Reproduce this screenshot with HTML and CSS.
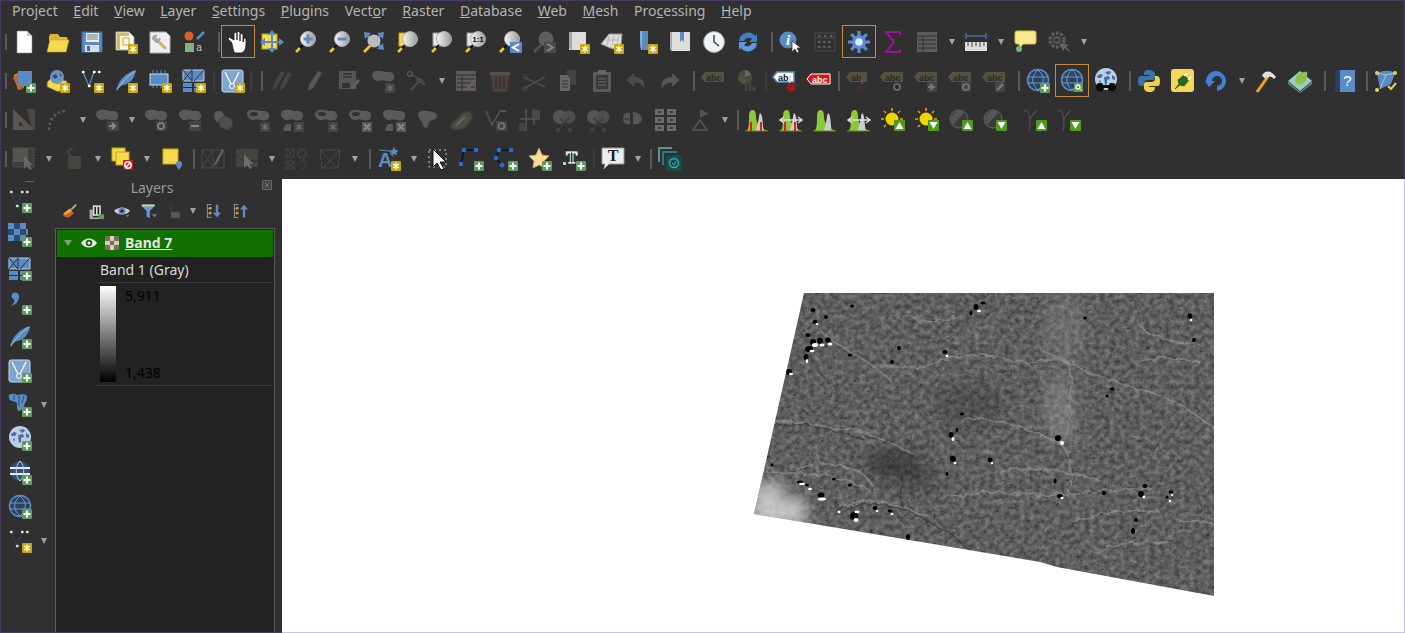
FILE: index.html
```html
<!DOCTYPE html>
<html lang="en">
<head>
<meta charset="utf-8">
<title>QGIS</title>
<link rel="stylesheet" href="styles.css">
</head>
<body>
<div class="app">
<nav class="menu">
<span>Pro<u>j</u>ect</span><span><u>E</u>dit</span><span><u>V</u>iew</span><span><u>L</u>ayer</span><span><u>S</u>ettings</span><span><u>P</u>lugins</span><span>Vect<u>o</u>r</span><span><u>R</u>aster</span><span><u>D</u>atabase</span><span><u>W</u>eb</span><span><u>M</u>esh</span><span>Pro<u>c</u>essing</span><span><u>H</u>elp</span>
</nav>

<div class="row">
<i class="h"></i>
<span class="b"><svg viewBox="0 0 24 24"><use href="#new"/></svg></span>
<span class="b"><svg viewBox="0 0 24 24"><use href="#open"/></svg></span>
<span class="b"><svg viewBox="0 0 24 24"><use href="#save"/></svg></span>
<span class="b"><svg viewBox="0 0 24 24"><use href="#layout"/><use href="#bs"/></svg></span>
<span class="b"><svg viewBox="0 0 24 24"><use href="#laymgr"/></svg></span>
<span class="b"><svg viewBox="0 0 24 24"><use href="#style"/></svg></span>
<i class="s w10"></i>
<span class="b on"><svg viewBox="0 0 24 24"><use href="#hand"/></svg></span>
<span class="b"><svg viewBox="0 0 24 24"><use href="#pansel"/></svg></span>
<span class="b"><svg viewBox="0 0 24 24"><use href="#gl"/><path d="M14 4.500v9M9.500 9h9" class="bl3"/></svg></span>
<span class="b"><svg viewBox="0 0 24 24"><use href="#gl"/><path d="M9.500 9h9" class="bl3"/></svg></span>
<span class="b"><svg viewBox="0 0 24 24"><use href="#full"/></svg></span>
<span class="b"><svg viewBox="0 0 24 24"><rect x="3" y="3" width="12" height="13" fill="#f5d94e" stroke="#c9a60c"/><use href="#gl"/></svg></span>
<span class="b"><svg viewBox="0 0 24 24"><rect x="3" y="3" width="12" height="13" fill="#e6e6e6" stroke="#999"/><use href="#gl"/></svg></span>
<span class="b"><svg viewBox="0 0 24 24"><rect x="3" y="3" width="12" height="13" fill="#e6e6e6" stroke="#999"/><use href="#gl"/><text x="14" y="12" class="t11">1:1</text></svg></span>
<span class="b"><svg viewBox="0 0 24 24"><use href="#gl"/><rect x="12" y="12" width="12" height="11" fill="#5b8bc5"/><path d="M21 14l-6 3.500 6 3.500" class="wh2"/></svg></span>
<span class="b"><svg viewBox="0 0 24 24"><use href="#gld"/><rect x="12" y="12" width="12" height="11" fill="#4a4a4a"/><path d="M15 14l6 3.500-6 3.500" class="gr2"/></svg></span>
<span class="b"><svg viewBox="0 0 24 24"><use href="#map"/><use href="#bs"/></svg></span>
<span class="b"><svg viewBox="0 0 24 24"><path d="M1 14L9 4h13l-1 11-8 4z" fill="#ddd" stroke="#999"/><path d="M5 10h14M9 6l-2 10M14 5l-2 11M19 5l-2 10" class="gl1"/><use href="#bs"/></svg></span>
<span class="b"><svg viewBox="0 0 24 24"><path d="M6 1h8v14c0 2 1 4 3 5H9c-2-1-3-3-3-5z" fill="#5b8bc5"/><path d="M6 1h2v19H7z" fill="#8fb4dc"/><use href="#bs"/></svg></span>
<span class="b"><svg viewBox="0 0 24 24"><path d="M2 2h20v19H4l-2-2z" fill="#ddd"/><path d="M2 2h2v19l-2-2z" fill="#aaa"/><path d="M12 2h4v10l-2-2-2 2z" fill="#5b8bc5"/></svg></span>
<span class="b"><svg viewBox="0 0 24 24"><circle cx="12" cy="12" r="10.500" fill="#f3f3f3" stroke="#8aa"/><path d="M12 5v7l5 4" class="ck"/></svg></span>
<span class="b"><svg viewBox="0 0 24 24"><path d="M3 11a9 9 0 0 1 16-5l2-2v8h-8l3-3a5 5 0 0 0-8 2z" fill="#3f7fc2"/><path d="M21 13a9 9 0 0 1-16 5l-2 2v-8h8l-3 3a5 5 0 0 0 8-2z" fill="#5b9bdb"/></svg></span>
<i class="s w9"></i>
<span class="b"><svg viewBox="0 0 24 24"><circle cx="9" cy="10" r="8.500" fill="#5b8bc5"/><text x="9" y="15" class="ti">i</text><path d="M13 11v11l3-3 2 4 2-1-2-4h4z" fill="#fff" stroke="#222" stroke-width=".7"/></svg></span>
<span class="b"><svg viewBox="0 0 24 24"><path d="M2 3h20v18H2zM2 8h20" fill="none" stroke="#4a4a4a"/><path d="M6 6h.5M12 6h.5M18 6h.5M6 12h.5M11 12h.5M16 12h.5M6 17h.5M11 17h.5M16 17h.5" stroke="#5e5e5e" stroke-width="2.500" stroke-linecap="round"/></svg></span>
<span class="b on"><svg viewBox="0 0 24 24"><use href="#gear"/></svg></span>
<span class="b"><svg viewBox="0 0 24 24"><path d="M19 5V2H5l8 10-8 10h14v-3" fill="none" stroke="#a010a0" stroke-width="2"/></svg></span>
<span class="b"><svg viewBox="0 0 24 24"><use href="#tbl"/></svg></span><i class="a"></i>
<span class="b"><svg viewBox="0 0 24 24"><path d="M2 6h20M2 3v6M22 3v6" class="rl"/><rect x="1" y="12" width="22" height="9" fill="#ddd"/><path d="M4 12v4M8 12v5M12 12v4M16 12v5M20 12v4" stroke="#444"/></svg></span><i class="a"></i>
<span class="b"><svg viewBox="0 0 24 24"><path d="M2 3a2 2 0 0 1 2-2h17a2 2 0 0 1 2 2v9a2 2 0 0 1-2 2H10l-3 4-1-4H4a2 2 0 0 1-2-2z" fill="#f9e88e" stroke="#dcbc3e"/><circle cx="6" cy="19" r="3" fill="#7fb37f"/></svg></span>
<span class="b"><svg viewBox="0 0 24 24"><use href="#agear"/></svg></span><i class="a"></i>
</div>

<div class="row">
<i class="h"></i>
<span class="b"><svg viewBox="0 0 24 24"><path d="M2 6l7-3 3 15-6 3z" fill="#e8a030"/><path d="M1 9l5-4 6 14-5 2z" fill="#d06020"/><rect x="6" y="2" width="14" height="15" fill="#5b8bc5"/><use href="#bp"/></svg></span>
<span class="b"><svg viewBox="0 0 24 24"><path d="M1 13l5-5 15 4v7l-9 4-11-5z" fill="#f5d94e" stroke="#555"/><circle cx="11" cy="8" r="7" fill="#6c93c4"/><path d="M6 7l4-2 2 3-3 2zM13 4l3 2-1 2z" fill="#2a4d80"/><use href="#bs"/></svg></span>
<span class="b"><svg viewBox="0 0 24 24"><use href="#vtx"/><use href="#bs"/></svg></span>
<span class="b"><svg viewBox="0 0 24 24"><use href="#feather"/><use href="#bs"/></svg></span>
<span class="b"><svg viewBox="0 0 24 24"><path d="M5 1v4M9 1v4M13 1v4M17 1v4M5 16v3M9 16v3M13 16v3" stroke="#5b8bc5"/><rect x="2" y="5" width="18" height="11" fill="#5b8bc5" stroke="#c8dcf0"/><use href="#bs"/></svg></span>
<span class="b"><svg viewBox="0 0 24 24"><use href="#grid"/><use href="#bs"/></svg></span>
<i class="s w5 dim"></i>
<span class="b"><svg viewBox="0 0 24 24"><use href="#vframe"/><use href="#bs"/></svg></span>
<i class="s w3 dim"></i><i class="s w11"></i>
<span class="b"><svg viewBox="0 0 24 24"><path d="M3 22l2-7L12 2l4 2-9 15zM11 22l1-6 7-13 4 2-8 14z" fill="#4a4540"/></svg></span>
<span class="b"><svg viewBox="0 0 24 24"><path d="M5 22l1-6L15 2l4 2-9 15z" fill="#5a5652"/></svg></span>
<span class="b"><svg viewBox="0 0 24 24"><path d="M2 2h17v18H2z" fill="#555"/><path d="M6 5h9M6 8h9" stroke="#333" stroke-width="1.500"/><rect x="5" y="14" width="8" height="5" fill="#333"/><path d="M14 21l1-4 6-7 2 2-6 7z" fill="#6a5f50"/></svg></span>
<span class="b"><svg viewBox="0 0 24 24"><use href="#blob"/><use href="#bx"/></svg></span>
<span class="b"><svg viewBox="0 0 24 24"><path d="M5 5l14 7" stroke="#555"/><circle cx="5" cy="5" r="2.500" fill="none" stroke="#666"/><path d="M6 21l10-11M12 10l8 6" stroke="#4f4a44" stroke-width="2.500"/></svg></span><i class="a"></i>
<span class="b"><svg viewBox="0 0 24 24"><use href="#tbl"/><path d="M12 22l1-4 7-8 2 2-7 8z" fill="#6a5f50"/></svg></span>
<span class="b"><svg viewBox="0 0 24 24"><path d="M3 5h18l-2 18H5z" fill="#4c403c"/><path d="M2 3h20v3H2z" fill="#5a4e48"/><path d="M8 8v12M12 8v12M16 8v12" stroke="#362e2c" stroke-width="1.500"/></svg></span>
<span class="b"><svg viewBox="0 0 24 24"><path d="M1 8l22 10M1 20L23 8" stroke="#4a4a4a" stroke-width="1.500"/><circle cx="3" cy="7" r="2" fill="none" stroke="#4a4a4a"/><circle cx="3" cy="20" r="2" fill="none" stroke="#4a4a4a"/></svg></span>
<span class="b"><svg viewBox="0 0 24 24"><path d="M11 1h9v15H11z" fill="#444"/><path d="M4 6h7l3 3v13H4z" fill="#666"/><path d="M6 12h6M6 15h6M6 18h6" stroke="#333"/></svg></span>
<span class="b"><svg viewBox="0 0 24 24"><rect x="3" y="3" width="18" height="20" rx="1" fill="#5a5a5a"/><rect x="6" y="6" width="12" height="14" fill="#3a3a3a"/><rect x="8" y="1" width="8" height="4" fill="#666"/><path d="M8 10h8M8 13h8M8 16h8" stroke="#666"/></svg></span>
<span class="b"><svg viewBox="0 0 24 24"><path d="M10 4L2 11l8 7v-4c5-1 8 1 10 6 2-8-3-12-10-12z" fill="#4f4a46"/></svg></span>
<span class="b"><svg viewBox="0 0 24 24"><path d="M14 4l8 7-8 7v-4c-5-1-8 1-10 6-2-8 3-12 10-12z" fill="#5a5652"/></svg></span>
<i class="s w9"></i>
<span class="b"><svg viewBox="0 0 24 24"><use href="#abc"/></svg></span>
<span class="b"><svg viewBox="0 0 24 24"><circle cx="10" cy="8" r="7" fill="#4a4a3e"/><path d="M10 8V1a7 7 0 0 1 6 5z" fill="#6a6a55"/><path d="M3 8l7 0 0 7a7 7 0 0 1-7-7z" fill="#3f5a3f"/><path d="M11 15v7M15 12v10M19 17v5" stroke="#444" stroke-width="2.500"/></svg></span>
<i class="s w4 dim"></i>
<span class="b"><svg viewBox="0 0 24 24"><path d="M0 8l4-5h17v10H4z" fill="#fff" stroke="#4a8ad0" stroke-width="1.500"/><text x="5" y="12" class="ta dk">ab</text><path d="M16 7h2v8h-2z" fill="#ddd"/><circle cx="18" cy="18" r="4.500" fill="#a01818"/></svg></span>
<span class="b"><svg viewBox="0 0 24 24"><path d="M0 10l4-5h19v10H4z" fill="#e01010" stroke="#fff"/><text x="5" y="14" class="ta wt">abc</text></svg></span>
<i class="s w5"></i>
<span class="b"><svg viewBox="0 0 24 24"><use href="#abd"/><path d="M15 10h2v7h-2z" fill="#555"/><circle cx="16" cy="19" r="4" fill="#3f3030"/></svg></span>
<span class="b"><svg viewBox="0 0 24 24"><use href="#abc"/><circle cx="17" cy="18" r="3" fill="#222" stroke="#666" stroke-width="2"/></svg></span>
<span class="b"><svg viewBox="0 0 24 24"><use href="#abc"/><rect x="13" y="13" width="10" height="10" fill="#444"/><path d="M14 18h5M16 15l4 3-4 3" stroke="#777" fill="none" stroke-width="2"/></svg></span>
<span class="b"><svg viewBox="0 0 24 24"><use href="#abc"/><rect x="13" y="13" width="10" height="10" fill="#444"/><circle cx="18" cy="18" r="3" fill="none" stroke="#777" stroke-width="1.500"/></svg></span>
<span class="b"><svg viewBox="0 0 24 24"><use href="#abc"/><rect x="13" y="13" width="10" height="10" fill="#444"/><path d="M15 21l6-6" stroke="#777" stroke-width="2.500"/></svg></span>
<i class="s w10"></i>
<span class="b"><svg viewBox="0 0 24 24"><use href="#wgl"/><use href="#bp"/></svg></span>
<span class="b on"><svg viewBox="0 0 24 24"><use href="#wgl"/><rect x="14" y="14" width="9" height="9" fill="#5f9a5f"/><circle cx="18" cy="18" r="2" fill="none" stroke="#fff" stroke-width="1.300"/><path d="M19.500 19.500l2 2" stroke="#fff"/></svg></span>
<span class="b"><svg viewBox="0 0 24 24"><use href="#earth"/><path d="M2 18a4 4 0 0 1 3-4h3l1 2h6l1-2h3a4 4 0 0 1 3 4 4 4 0 0 1-8 1h-4a4 4 0 0 1-8-1z" fill="#0c0c0c"/></svg></span>
<i class="s w9"></i>
<span class="b"><svg viewBox="0 0 24 24"><path d="M12 1c-5 0-5 2-5 5h6v1H4c-3 0-3 4-3 5s0 5 3 5h3v-3c0-2 2-3 4-3h5c1 0 2-1 2-2V5c0-2-3-4-6-4z" fill="#3c74a6"/><path d="M12 23c5 0 6-2 6-5h-6v-1h9c2 0 2-4 2-5s0-5-3-5h-2v3c0 2-2 3-4 3H9c-1 0-2 1-2 2v4c0 2 2 4 5 4z" fill="#f5cf4a"/></svg></span>
<span class="b"><svg viewBox="0 0 24 24"><rect width="23" height="23" rx="3" fill="#f5d55a"/><path d="M4 20l4-5-1-4 6-5 5 5-5 6-4-1z" fill="#1c6d1c" stroke="#0c3c0c" stroke-width=".6"/><path d="M13 7l3-3M17 11l3-3" stroke="#fff" stroke-width="1.500"/></svg></span>
<span class="b"><svg viewBox="0 0 24 24"><path d="M1 12A10 10 0 1 1 12 22v-5A5 5 0 1 0 7 12h3L4 18 0 12z" fill="#3f82d8"/></svg></span><i class="a"></i>
<span class="b"><svg viewBox="0 0 24 24"><path d="M3 23l12-17" stroke="#eaa820" stroke-width="3"/><path d="M9 5c4-4 9-3 13 3l-2 2c-3-3-5-3-7-2l-1 2-4-3z" fill="#e0e0e0"/></svg></span>
<span class="b"><svg viewBox="0 0 24 24"><path d="M0 13l12 10 12-10v2L12 24 0 15z" fill="#5f9a94"/><path d="M0 12l12-10 12 10-12 10z" fill="#9cccc4"/><path d="M7 12c0-6 7-10 12-9 1 6-2 12-8 13-2-1-3-2-4-4z" fill="#8fc04a"/></svg></span>
<i class="s w10"></i>
<span class="b"><svg viewBox="0 0 24 24"><rect x="3" y="1" width="20" height="22" fill="#5b8bc5"/><rect x="3" y="1" width="5" height="22" fill="#2c3e58"/><text x="15.500" y="17" class="tq">?</text></svg></span>
<i class="s w8"></i>
<span class="b"><svg viewBox="0 0 24 24"><path d="M3 4c7-3 13-3 18 0l-4 11-11 5z" fill="#5b8bc5"/><path d="M3 4l9 2 9-2M12 6l-6 14" stroke="#9cc" fill="none"/><circle cx="3" cy="4" r="2" fill="#eed045"/><circle cx="21" cy="4" r="2" fill="#eed045"/><circle cx="3" cy="21" r="2" fill="#eed045"/><path d="M14 17l3 3 5-6" stroke="#eed045" stroke-width="2" fill="none"/></svg></span>
</div>

<div class="row">
<i class="h"></i>
<span class="b"><svg viewBox="0 0 24 24"><path d="M1 1l22 21H1zM7 13v5h5z" fill="#5a5550" fill-rule="evenodd"/><path d="M15 1h8v21h-3z" fill="#4a4845"/></svg></span>
<span class="b"><svg viewBox="0 0 24 24"><path d="M3 22C3 12 8 4 20 3" fill="none" stroke="#5a5a5a" stroke-width="2.500" stroke-dasharray="2.500 2.500"/></svg></span><i class="a"></i>
<span class="b"><svg viewBox="0 0 24 24"><use href="#blob"/><rect x="12" y="13" width="12" height="10" fill="#444"/><path d="M14 18h5M17 15l3 3-3 3" stroke="#888" stroke-width="2" fill="none"/></svg></span><i class="a"></i>
<span class="b"><svg viewBox="0 0 24 24"><use href="#blob"/><rect x="12" y="13" width="11" height="10" fill="#444"/><circle cx="17" cy="18" r="3" fill="none" stroke="#888" stroke-width="1.500"/></svg></span>
<span class="b"><svg viewBox="0 0 24 24"><use href="#blob"/><rect x="11" y="13" width="12" height="10" fill="#444"/><path d="M13 18h8" stroke="#888" stroke-width="2"/></svg></span>
<span class="b"><svg viewBox="0 0 24 24"><path d="M2 7c0-4 5-5 8-3l5 7-4 5-6-2c-2-2-3-4-3-7z" fill="#5a5a5a"/><path d="M13 8l7 3 1 7-6 4-7-3-1-7z" fill="#4e4e4e" stroke="#3c3c3c"/></svg></span>
<span class="b"><svg viewBox="0 0 24 24"><use href="#ring"/><use href="#bx"/></svg></span>
<span class="b"><svg viewBox="0 0 24 24"><use href="#blob"/><path d="M3 21l3-5h5v7H4z" fill="#5a5a5a"/><use href="#bx"/></svg></span>
<span class="b"><svg viewBox="0 0 24 24"><use href="#ring"/><use href="#bx"/></svg></span>
<span class="b"><svg viewBox="0 0 24 24"><use href="#ring"/><use href="#bd"/></svg></span>
<span class="b"><svg viewBox="0 0 24 24"><use href="#blob"/><path d="M3 21l3-5h5v7H4z" fill="#5a5a5a"/><use href="#bd"/></svg></span>
<span class="b"><svg viewBox="0 0 24 24"><path d="M2 6c0-3 6-4 10-3s9 1 9 5-5 4-7 5-1 7-4 7-3-4-4-6-4-4-4-8z" fill="#5a5a5a"/></svg></span>
<span class="b"><svg viewBox="0 0 24 24"><path d="M1 18c0-4 5-5 8-9s8-7 11-5 3 6 0 10-7 8-12 8-7-1-7-4z" fill="#4d4d45" stroke="#3c3c36" stroke-width="1.500"/><path d="M6 17c3-1 6-6 9-8" stroke="#666" stroke-width="2"/></svg></span>
<span class="b"><svg viewBox="0 0 24 24"><path d="M2 3l6 14 8-14" fill="none" stroke="#555" stroke-width="1.500"/><path d="M16 3h6" stroke="#555" stroke-width="2"/><rect x="12" y="13" width="11" height="10" fill="#444"/><circle cx="17.500" cy="18" r="3" fill="none" stroke="#777" stroke-width="1.500"/></svg></span>
<span class="b"><svg viewBox="0 0 24 24"><path d="M2 11h20M8 1v22M16 1v16" stroke="#555" stroke-width="1.500"/><rect x="1" y="15" width="7" height="8" fill="#444"/><rect x="14" y="2" width="8" height="8" fill="#4a4a40"/></svg></span>
<span class="b"><svg viewBox="0 0 24 24"><use href="#sci"/></svg></span>
<span class="b"><svg viewBox="0 0 24 24"><use href="#sci"/></svg></span>
<span class="b"><svg viewBox="0 0 24 24"><path d="M10 5c-5-1-7 2-7 6s3 6 7 5zM13 4l4 1c3 1 5 3 5 6s-3 6-9 5z" fill="#555"/><path d="M3 11h6" stroke="#333"/></svg></span>
<span class="b"><svg viewBox="0 0 24 24"><use href="#drw"/></svg></span>
<span class="b"><svg viewBox="0 0 24 24"><path d="M12 11V1l9 5-8 3" fill="#555"/><path d="M12 12l-7 10h14z" fill="none" stroke="#555" stroke-width="1.500"/></svg></span><i class="a"></i>
<i class="s w8"></i>
<span class="b"><svg viewBox="0 0 24 24"><use href="#hist"/><path d="M6 14v9M16 14v9" stroke="#e02020" stroke-width="2"/></svg></span>
<span class="b"><svg viewBox="0 0 24 24"><use href="#hist"/><path d="M6 14v9M16 14v9" stroke="#e02020" stroke-width="2"/><path d="M1 12h22M5 9l-4 3 4 3M19 9l4 3-4 3" class="arw"/></svg></span>
<span class="b"><svg viewBox="0 0 24 24"><use href="#hist"/></svg></span>
<span class="b"><svg viewBox="0 0 24 24"><use href="#hist"/><path d="M1 12h22M5 9l-4 3 4 3M19 9l4 3-4 3" class="arw"/></svg></span>
<span class="b"><svg viewBox="0 0 24 24"><use href="#sun"/><rect x="13" y="12" width="11" height="11" fill="#4d9a1c"/><path d="M18.500 14l4 7h-8z" fill="#fff"/></svg></span>
<span class="b"><svg viewBox="0 0 24 24"><use href="#sun"/><rect x="13" y="12" width="11" height="11" fill="#4d9a1c"/><path d="M18.500 21l4-7h-8z" fill="#fff"/></svg></span>
<span class="b"><svg viewBox="0 0 24 24"><use href="#con"/><rect x="13" y="12" width="11" height="11" rx="1" fill="#4d9a1c"/><path d="M18.500 14l4 7h-8z" fill="#fff"/></svg></span>
<span class="b"><svg viewBox="0 0 24 24"><use href="#con"/><rect x="13" y="12" width="11" height="11" rx="1" fill="#4d9a1c"/><path d="M18.500 21l4-7h-8z" fill="#fff"/></svg></span>
<i class="s w6 none"></i>
<span class="b"><svg viewBox="0 0 24 24"><use href="#gam"/><rect x="13" y="12" width="11" height="11" rx="1" fill="#4d9a1c"/><path d="M18.500 14l4 7h-8z" fill="#fff"/></svg></span>
<span class="b"><svg viewBox="0 0 24 24"><use href="#gam"/><rect x="13" y="12" width="11" height="11" rx="1" fill="#4d9a1c"/><path d="M18.500 21l4-7h-8z" fill="#fff"/></svg></span>
</div>

<div class="row">
<i class="h"></i>
<span class="b"><svg viewBox="0 0 24 24"><rect x="1" y="1" width="21" height="19" fill="#3e3e38" stroke="#5a5a50" stroke-dasharray="2 1"/><rect x="1" y="1" width="15" height="14" fill="#55554d"/><path d="M12 9v13l3-3 3 4 2-1-3-4h4z" fill="#666"/></svg></span><i class="a"></i>
<span class="b"><svg viewBox="0 0 24 24"><rect x="7" y="9" width="13" height="13" fill="#44443c"/><path d="M12 2c-6 0-6 4-2 7s4 7-2 9" fill="none" stroke="#4a4a44" stroke-width="1.500"/></svg></span><i class="a"></i>
<span class="b"><svg viewBox="0 0 24 24"><rect x="2" y="1" width="13" height="13" fill="#f5d94e" stroke="#c9a60c"/><rect x="6" y="5" width="13" height="13" fill="#f5d94e" stroke="#c9a60c"/><rect x="13" y="13" width="10" height="10" rx="1" fill="#d01818"/><circle cx="18" cy="18" r="3.200" fill="none" stroke="#fff" stroke-width="1.500"/><path d="M16 20l4-4" stroke="#fff" stroke-width="1.500"/></svg></span><i class="a"></i>
<span class="b"><svg viewBox="0 0 24 24"><rect x="4" y="2" width="15" height="15" fill="#f5d94e" stroke="#c9a60c"/><path d="M20 23c-2-3-3-4-3-6a3 3 0 0 1 6 0c0 2-1 3-3 6z" fill="#5b8bc5"/></svg></span>
<i class="s w8"></i>
<span class="b"><svg viewBox="0 0 24 24"><path d="M1 3h22v18H1zM1 3l11 18M12 3L1 21M12 3v18" fill="none" stroke="#4a4a4a"/><path d="M12 20l2-5 7-13 2 1-7 14z" fill="#6a5f50"/></svg></span>
<span class="b"><svg viewBox="0 0 24 24"><rect x="1" y="2" width="22" height="18" fill="#45453c"/><path d="M1 8l10 8M4 2l10 16M14 14h9" stroke="#333"/><path d="M9 7v14l3-3 3 4 2-1-3-4h4z" fill="#6e6e6e"/></svg></span><i class="a"></i>
<span class="b"><svg viewBox="0 0 24 24"><path d="M2 2h8v8H2zM14 2h8v8h-8zM2 14h8v8H2zM2 2l8 8M10 2l-8 8M2 14l8 8M10 14l-8 8" fill="none" stroke="#444"/><path d="M18 2l5 6-5 6-5-6zM18 14a4 4 0 1 1 0 8" fill="none" stroke="#444"/></svg></span>
<span class="b"><svg viewBox="0 0 24 24"><path d="M2 3h20l-2 18H4zM2 3l10 11 10-11M12 14l-8 7M12 14l8 7" fill="none" stroke="#4e4a44"/></svg></span><i class="a"></i>
<i class="s w10"></i>
<span class="b"><svg viewBox="0 0 24 24"><path d="M2 3l10 1 5 6" fill="none" stroke="#5b8bc5"/><text x="1" y="20" class="tA">A</text><path d="M17 0l1.500 3 3 .5-2 2 .5 3-3-1.500-3 1.500.5-3-2-2 3-.5z" fill="#5b8bc5"/><use href="#bs"/></svg></span><i class="a"></i>
<span class="b"><svg viewBox="0 0 24 24"><rect x="3" y="3" width="17" height="17" fill="none" stroke="#ccc" stroke-dasharray="2 3"/><path d="M7 2v18l4-4 4 7 3-1-4-7h6z" fill="#fff" stroke="#111"/></svg></span>
<span class="b"><svg viewBox="0 0 24 24"><path d="M4 3h12M4 3L1 17" fill="none" stroke="#111" stroke-width="1.500"/><circle cx="4" cy="3" r="2.300" class="nd"/><circle cx="16" cy="3" r="2.300" class="nd"/><circle cx="1" cy="17" r="2.300" class="nd"/><use href="#bp"/></svg></span>
<span class="b"><svg viewBox="0 0 24 24"><path d="M5 3h12M5 3L2 11l6 7" fill="none" stroke="#111" stroke-width="1.500"/><circle cx="5" cy="3" r="2.300" class="nd"/><circle cx="17" cy="3" r="2.300" class="nd"/><circle cx="2" cy="11" r="2.300" class="nd"/><circle cx="8" cy="18" r="2.300" class="nd"/><use href="#bp"/></svg></span>
<span class="b"><svg viewBox="0 0 24 24"><path d="M11 1l3 7 7 1-5 5 1 7-6-3-6 3 1-7-5-5 7-1z" fill="#f7dc95" stroke="#c9a050"/><use href="#bp"/></svg></span>
<span class="b"><svg viewBox="0 0 24 24"><text x="4" y="16" class="tT">T</text><rect x="1" y="15" width="3" height="3" fill="#ccc"/><use href="#bp"/></svg></span>
<i class="s w5 dim"></i>
<span class="b"><svg viewBox="0 0 24 24"><path d="M1 1h22v16H8l-5 5 1-5H1z" fill="#eee" stroke="#999"/><text x="12" y="14" class="tB">T</text></svg></span><i class="a"></i>
<i class="s w8"></i>
<span class="b"><svg viewBox="0 0 24 24"><path d="M1 15V1h13" fill="none" stroke="#8aa" stroke-width="1.500"/><path d="M5 18V5h14" fill="none" stroke="#1a9a94" stroke-width="1.500"/><rect x="9" y="9" width="14" height="14" fill="#1d4a48" stroke="#155"/><circle cx="16" cy="16" r="4.500" fill="none" stroke="#2bb" stroke-width="1.300"/><path d="M14 16l2 2 2-4" stroke="#2bb" fill="none"/></svg></span>
</div>

<div class="main">
<aside class="vt">
<i class="vh"></i>
<span class="v"><svg viewBox="0 0 24 24"><use href="#vtxd"/><use href="#bp"/></svg></span>
<span class="v"><svg viewBox="0 0 24 24"><path d="M0 0h6v6H0zM12 0h6v6h-6zM6 6h6v6H6zM18 6h2v6h-2zM0 12h6v6H0zM12 12h6v6h-6z" fill="#5b8bc5"/><path d="M6 0h6v6H6zM0 6h6v6H0zM12 6h6v6h-6zM6 12h6v6H6z" fill="#2c4a70"/><use href="#bp"/></svg></span>
<span class="v"><svg viewBox="0 0 24 24"><use href="#grid"/><use href="#bp"/></svg></span>
<span class="v"><svg viewBox="0 0 24 24"><path d="M5 2a4 4 0 0 1 6 3c0 6-4 9-8 10 3-3 4-5 3-7-3 0-3-5-1-6z" fill="#5b8bc5"/><use href="#bp"/></svg></span>
<span class="v"><svg viewBox="0 0 24 24"><use href="#feather"/><use href="#bp"/></svg></span>
<span class="v"><svg viewBox="0 0 24 24"><use href="#vframe"/><use href="#bp"/></svg></span>
<span class="v"><svg viewBox="0 0 24 24"><path d="M1 2c3-2 6-1 8 0 3-1 8-1 9 0 2 2 1 6-1 8-1 1 0 4-2 5-2 2-3 3-4 3s-2-1-2-5c0-2 0-3-1-4L4 8C1 7 0 4 1 2z" fill="#5b8bc5"/><path d="M6 2v5M11 2v11M16 3l-2 7" stroke="#2c4a70"/><use href="#bp"/></svg></span><i class="a"></i>
<span class="v"><svg viewBox="0 0 24 24"><use href="#earth"/><use href="#bp"/></svg></span>
<span class="v"><svg viewBox="0 0 24 24"><circle cx="12" cy="10" r="10" fill="#2c4f80"/><path d="M2 7h20M2 13h20" stroke="#eee" stroke-width="2"/><path d="M12 0C7 5 7 15 12 20M12 0c5 5 5 15 0 20" fill="none" stroke="#ccd" /><use href="#bp"/></svg></span>
<span class="v"><svg viewBox="0 0 24 24"><use href="#wgl"/><use href="#bp"/></svg></span>
<span class="v"><svg viewBox="0 0 24 24"><use href="#vtxd"/><use href="#bs"/></svg></span><i class="a"></i>
</aside>

<section class="panel">
<header class="ptitle"><span>Layers</span><svg class="flt" viewBox="0 0 10 10"><path d="M.5.5h9v9h-9z" fill="#444" stroke="#666"/><path d="M3 3l4 4M7 3L3 7" stroke="#777"/></svg></header>
<div class="ptools">
<svg viewBox="0 0 20 20"><path d="M3 13l8-6 5 6-6 5-7-1z" fill="#d85a30"/><path d="M3 13l8-6 3 3-9 5z" fill="#e8b030"/><path d="M13 8l6-6" stroke="#d8b060" stroke-width="2"/></svg>
<svg viewBox="0 0 20 20"><path d="M2 8h4v10h8v2H2z" fill="#aaa"/><rect x="6" y="3" width="10" height="13" fill="#ddd"/><path d="M9 5v9M13 5v9" stroke="#222" stroke-width="2"/><rect x="13" y="14" width="7" height="6" fill="#5f9a5f"/></svg>
<svg viewBox="0 0 20 20"><path d="M0 10c5-6 15-6 20 0-5 6-15 6-20 0z" fill="#ccc"/><circle cx="10" cy="10" r="4.500" fill="#5b8bc5"/><circle cx="10" cy="10" r="2" fill="#223"/><path d="M15 15l4 0-2 3z" fill="#777"/></svg>
<svg viewBox="0 0 20 20"><path d="M1 2h16v2l-6 6v9l-4-2v-7L1 4z" fill="#6a9ad0"/><path d="M1 2h16v2H1z" fill="#f5d94e"/><path d="M13 14h7l-3 4z" fill="#777"/></svg>
<svg viewBox="0 0 20 20"><rect x="5" y="11" width="11" height="8" fill="#555"/><circle cx="5" cy="3" r="2" fill="none" stroke="#3f3f3f"/><circle cx="5" cy="8" r="2" fill="none" stroke="#3f3f3f"/></svg><i class="a t"></i>
<svg viewBox="0 0 20 20"><path d="M2 2h6M2 18h6M3 2v16M3 7h5M3 13h5" stroke="#aaa" fill="none"/><path d="M5 5h3v3H5zM5 11h3v3H5z" fill="#e8902a"/><path d="M15 2v12" stroke="#5b8bc5" stroke-width="3"/><path d="M10 12h10l-5 6z" fill="#5b8bc5"/></svg>
<svg viewBox="0 0 20 20"><path d="M2 2h6M2 18h6M3 2v16M3 7h5M3 13h5" stroke="#aaa" fill="none"/><path d="M5 5h3v3H5zM5 11h3v3H5z" fill="#e8902a"/><path d="M15 18V6" stroke="#5b8bc5" stroke-width="3"/><path d="M10 8h10l-5-6z" fill="#5b8bc5"/></svg>
</div>
<div class="tree">
<div class="sel">
<i class="tw"></i>
<svg class="eye" viewBox="0 0 18 12"><path d="M1 6c4-6 12-6 16 0-4 6-12 6-16 0z" fill="#eee"/><circle cx="9" cy="6" r="3.300" fill="#1a6a08"/><circle cx="9" cy="6" r="1.500" fill="#eee"/></svg>
<svg class="rst" viewBox="0 0 14 14"><path d="M0 0h5v5H0zM9 0h5v5H9zM5 5h4v4H5zM0 9h5v5H0zM9 9h5v5H9z" fill="#7c6e58"/><path d="M5 0h4v5H5zM0 5h5v4H0zM9 5h5v4H9zM5 9h4v5H5z" fill="#d8d0bc"/></svg>
<b>Band 7</b>
</div>
<div class="lname">Band 1 (Gray)</div>
<div class="legend">
<i class="ramp"></i>
<div class="vals"><span>5,911</span><span>1,438</span></div>
</div>
</div>
</section>
<div class="split"></div>

<section class="map">
<svg class="cv" viewBox="282 179 1122 453">
<defs>
<filter id="nz" x="0" y="0" width="100%" height="100%" color-interpolation-filters="sRGB">
<feTurbulence type="fractalNoise" baseFrequency=".2" numOctaves="3" seed="11"/>
<feColorMatrix values=".34 0 0 0 .2 .34 0 0 0 .2 .34 0 0 0 .2 0 0 0 0 1"/>
</filter>
<filter id="vein" x="0" y="0" width="100%" height="100%" color-interpolation-filters="sRGB">
<feTurbulence type="turbulence" baseFrequency=".022 .032" numOctaves="3" seed="8"/>
<feColorMatrix values="0 0 0 0 .78 0 0 0 0 .78 0 0 0 0 .78 -9 0 0 0 1"/>
</filter>
<filter id="spk" x="0" y="0" width="100%" height="100%" color-interpolation-filters="sRGB">
<feTurbulence type="fractalNoise" baseFrequency=".3" numOctaves="2" seed="21"/>
<feColorMatrix values="0 0 0 0 0 0 0 0 0 0 0 0 0 0 0 10 0 0 0 -7"/>
</filter>
<filter id="wob" x="-5%" y="-5%" width="110%" height="110%">
<feTurbulence type="fractalNoise" baseFrequency=".09" numOctaves="3" seed="4" result="n"/>
<feDisplacementMap in="SourceGraphic" in2="n" scale="9"/>
</filter>
<filter id="bl8"><feGaussianBlur stdDeviation="7"/></filter>
<filter id="bl1"><feGaussianBlur stdDeviation=".5"/></filter>
<clipPath id="cp"><path d="M804 293H1214V596L1057 567 1040 562 754 514z"/></clipPath>
</defs>
<g clip-path="url(#cp)">
<rect x="750" y="290" width="470" height="310" fill="#606060" filter="url(#nz)"/>
<rect x="750" y="290" width="470" height="310" filter="url(#vein)" opacity=".24"/>
<rect x="750" y="290" width="470" height="310" filter="url(#spk)" opacity=".35"/>
<g filter="url(#bl8)">
<path d="M750 526l4-40 22-6 28 18 4 26z" fill="#ddd" opacity=".8"/>
<ellipse cx="1060" cy="410" rx="16" ry="36" fill="#aaa" opacity=".34"/>
<ellipse cx="1065" cy="330" rx="22" ry="36" fill="#999" opacity=".26"/>
<ellipse cx="970" cy="405" rx="36" ry="22" fill="#333" opacity=".28"/>
<ellipse cx="790" cy="494" rx="14" ry="6" fill="#222" opacity=".6"/>
<ellipse cx="893" cy="463" rx="26" ry="16" fill="#222" opacity=".5"/>
<ellipse cx="920" cy="478" rx="16" ry="12" fill="#222" opacity=".4"/>
</g>
<g class="riv" filter="url(#wob)">
<path d="M912 316c8 10 24 4 44 2M880 366c24 0 40 4 58-4s50-10 70-2 40-6 60 4M1066 360c10 20 6 50 0 80M1140 360c22-6 40 2 58 0M770 420c30 4 60 6 84 10s40 16 60 24"/>
<path d="M795 470c20-8 40-8 60 0s20 26 24 36M960 420c30-6 60 8 90 18s20 50 18 60M952 497c30-6 60-4 90-2s70-8 110-6M1100 550c20-10 50-6 70-8M1180 522c20-2 30 0 44 6M1042 350c20 10 60 30 100 40s60 30 80 44"/>
<path d="M760 470c40 6 70 0 110 20M840 505c30-10 60 0 90 12M1070 520c30-4 60-12 90-8M1140 325c10 14 30 16 60 20M820 330c20 20 50 30 70 50M1000 470c30-4 60 0 100 10"/>
</g>
<g class="riv2" filter="url(#wob)">
<path d="M835 510c20-8 50-6 66-2s26 14 40 20 20 18 32 24M775 425c30-2 70 6 90 16M900 470c6 12-4 30 4 40"/>
</g>
<g filter="url(#bl1)" fill="#000">
<ellipse cx="813" cy="310" rx="2.500" ry="2"/><ellipse cx="815" cy="322" rx="2.500" ry="2"/><ellipse cx="826" cy="317" rx="2" ry="2"/><ellipse cx="808" cy="335" rx="2.500" ry="2"/><ellipse cx="813" cy="342" rx="3" ry="3"/><ellipse cx="820" cy="341" rx="3" ry="3"/><ellipse cx="828" cy="340" rx="3" ry="2.500"/><ellipse cx="809" cy="349" rx="4" ry="3"/><ellipse cx="806" cy="357" rx="2.500" ry="3"/><ellipse cx="789" cy="372" rx="3" ry="3"/><ellipse cx="852" cy="306" rx="2" ry="1.500"/><ellipse cx="976" cy="307" rx="2.500" ry="3"/><ellipse cx="983" cy="303" rx="2.500" ry="1.500"/><ellipse cx="971" cy="313" rx="1.500" ry="2.500"/><ellipse cx="1190" cy="316" rx="2.500" ry="2.500"/><ellipse cx="1194" cy="340" rx="2" ry="2"/><ellipse cx="1085" cy="318" rx="2" ry="1.500"/><ellipse cx="899" cy="348" rx="2" ry="2"/><ellipse cx="945" cy="352" rx="2.500" ry="2"/><ellipse cx="850" cy="355" rx="2.500" ry="1.500"/><ellipse cx="892" cy="362" rx="2" ry="2"/><ellipse cx="1112" cy="389" rx="2.500" ry="1.500"/><ellipse cx="1107" cy="396" rx="1.500" ry="1.500"/><ellipse cx="962" cy="414" rx="2" ry="1.500"/><ellipse cx="951" cy="435" rx="2.500" ry="3"/><ellipse cx="957" cy="430" rx="1.500" ry="2"/><ellipse cx="1058" cy="438" rx="3" ry="3"/><ellipse cx="953" cy="459" rx="3" ry="3"/><ellipse cx="990" cy="460" rx="2.500" ry="2.500"/><ellipse cx="947" cy="474" rx="1.500" ry="2"/><ellipse cx="1055" cy="481" rx="1.500" ry="2.500"/><ellipse cx="1060" cy="496" rx="3" ry="2"/><ellipse cx="1104" cy="493" rx="2.500" ry="2"/><ellipse cx="1145" cy="486" rx="2.500" ry="2"/><ellipse cx="1141" cy="494" rx="3" ry="3"/><ellipse cx="1171" cy="492" rx="2.500" ry="1.500"/><ellipse cx="1167" cy="497" rx="1.500" ry="1.500"/><ellipse cx="800" cy="482" rx="3" ry="1.500"/><ellipse cx="807" cy="485" rx="2" ry="1.500"/><ellipse cx="821" cy="495" rx="3.500" ry="2.500"/><ellipse cx="854" cy="516" rx="4" ry="4"/><ellipse cx="875" cy="508" rx="2.500" ry="2"/><ellipse cx="890" cy="511" rx="2.500" ry="1.500"/><ellipse cx="908" cy="537" rx="2" ry="3"/><ellipse cx="1133" cy="531" rx="2" ry="3"/><ellipse cx="1136" cy="520" rx="2" ry="2"/><ellipse cx="834" cy="479" rx="2" ry="1.500"/><ellipse cx="850" cy="485" rx="2" ry="1.500"/><ellipse cx="772" cy="465" rx="1.500" ry="1.500"/>
</g>
<g filter="url(#bl1)" fill="#fff">
<ellipse cx="817" cy="324" rx="1.500" ry="1"/><ellipse cx="815" cy="345" rx="3" ry="2"/><ellipse cx="822" cy="345" rx="2.500" ry="1.500"/><ellipse cx="830" cy="344" rx="2.500" ry="1.500"/><ellipse cx="812" cy="351" rx="2.500" ry="1.200"/><ellipse cx="807" cy="361" rx="1.200" ry="2"/><ellipse cx="791" cy="374" rx="2" ry="1.200"/><ellipse cx="979" cy="311" rx="2" ry="1.200"/><ellipse cx="1191" cy="320" rx="1.200" ry="1.200"/><ellipse cx="947" cy="356" rx="1.500" ry="1.200"/><ellipse cx="953" cy="439" rx="1.500" ry="2"/><ellipse cx="955" cy="463" rx="1.500" ry="1.200"/><ellipse cx="992" cy="463" rx="1.200" ry="1.200"/><ellipse cx="1062" cy="443" rx="2" ry="2"/><ellipse cx="1062" cy="498" rx="1.500" ry="1.200"/><ellipse cx="1144" cy="497" rx="1.500" ry="1.500"/><ellipse cx="1172" cy="495" rx="1.200" ry="1"/><ellipse cx="1170" cy="501" rx="1.200" ry="1.200"/><ellipse cx="802" cy="484" rx="3" ry="1.200"/><ellipse cx="810" cy="489" rx="2" ry="1.200"/><ellipse cx="822" cy="499" rx="4" ry="1.500"/><ellipse cx="857" cy="512" rx="2.500" ry="1.200"/><ellipse cx="856" cy="520" rx="2.500" ry="2"/><ellipse cx="839" cy="512" rx="1.500" ry="1.200"/><ellipse cx="877" cy="511" rx="1.500" ry="1"/><ellipse cx="892" cy="514" rx="1.500" ry="1"/>
</g>
</g>
</svg>
</section>
</div>
</div>

<svg class="defs" viewBox="0 0 24 24">
<defs>
<linearGradient id="gg" x1="0" x2="1"><stop offset="0" stop-color="#f6f6f6"/><stop offset="1" stop-color="#9a9a9a"/></linearGradient>
<g id="bp"><rect x="14" y="14" width="10" height="10" rx="1" fill="#5f9a5f"/><path d="M19 15.500v7M15.500 19h7" stroke="#fff" stroke-width="2"/></g>
<g id="bs"><rect x="14" y="14" width="10" height="10" rx="1" fill="#c9a60c"/><path d="M19 15.500v7M16 17l6 4M22 17l-6 4" stroke="#fff" stroke-width="1.300"/></g>
<g id="bx"><rect x="14" y="14" width="10" height="10" fill="#444"/><path d="M19 15.500v7M16 17l6 4M22 17l-6 4" stroke="#6e6e6e" stroke-width="1.300"/></g>
<g id="bd"><rect x="14" y="14" width="10" height="10" fill="#555"/><path d="M16 16l6 6M22 16l-6 6" stroke="#888" stroke-width="2"/></g>
<path id="blob" d="M1 6c0-4 5-5 9-4s5 1 8 1 6 2 5 6-5 4-8 3-5-1-7 0-7-2-7-6z" fill="#5a5a5a"/>
<g id="ring"><path d="M1 6c0-4 5-5 9-4s5 1 8 1 6 2 5 6-5 4-8 3-5-1-7 0-7-2-7-6z" fill="#5a5a5a"/><ellipse cx="8" cy="6" rx="4" ry="2" fill="#303030"/></g>
<g id="new"><path d="M5 1h10l5 5v17H5z" fill="#fff" stroke="#888" stroke-width=".6"/><path d="M15 1v5h5" fill="#ccc"/></g>
<g id="open"><path d="M3 7l1-3h8l2 3h7l1 4H3z" fill="#d9b53e"/><path d="M4 10h19l-3 12H1z" fill="#f5d94e" stroke="#c9a60c" stroke-width=".6"/></g>
<g id="save"><path d="M2 2h20v20H2z" fill="#5b8bc5" stroke="#3f6fa5"/><rect x="6" y="3" width="13" height="9" fill="#eee"/><path d="M7 5h11M7 7h11M7 9h11" stroke="#777"/><rect x="5" y="15" width="14" height="7" fill="#ddd"/><rect x="7" y="16" width="3" height="5" fill="#3f6fa5"/></g>
<g id="layout"><path d="M2 2h13l5 5v13H2z" fill="#f6f6f6" stroke="#aaa"/><rect x="3" y="3" width="12" height="3" fill="#e8b830"/><rect x="3" y="3" width="3" height="16" fill="#e8b830"/><path d="M9 8h6v7H9z" fill="none" stroke="#c9a60c"/></g>
<g id="laymgr"><path d="M2 2h16l4 4v17H2z" fill="#f0f0f4" stroke="#aab"/><path d="M6 7l12 12" stroke="#d8b060" stroke-width="3"/><path d="M4 9a4 4 0 0 1 6-4l-2 2 2 2 2-2a4 4 0 0 1-4 6z" fill="#aaa"/></g>
<g id="style"><circle cx="7" cy="6" r="4.500" fill="#d4602a"/><path d="M15 9l7-7" stroke="#5b8bc5" stroke-width="2.500"/><rect x="3" y="13" width="9" height="9" fill="#7fb37f"/><text x="17" y="21" class="ts">a</text></g>
<g id="hand"><path d="M6 13L2 9l1-2 5 3V3l2-1 1 1v7-8l2-1 1 2v8V4l2-1 1 2v7l1-4 2 0 0 6c0 5-2 9-5 9H9c-2-2-2-5-3-9z" fill="#fff" stroke="#111" stroke-width=".8"/></g>
<g id="pansel"><rect x="2" y="4" width="15" height="15" fill="#f5d94e" stroke="#c9a60c"/><path d="M12 0l4 5H8zM12 23l4-5H8zM0 12l5-4v8zM24 12l-5-4v8z" fill="#5b8bc5"/><path d="M12 4v15M4 12h16" stroke="#5b8bc5" stroke-width="2"/></g>
<g id="gl"><path d="M2 22l4-4" stroke="#f0c93a" stroke-width="2.500"/><path d="M6 18l3-3" stroke="#111" stroke-width="2"/><circle cx="14" cy="9" r="7.500" fill="url(#gg)" stroke="#aaa"/></g>
<g id="gld"><path d="M2 22l7-7" stroke="#555" stroke-width="2.500"/><circle cx="14" cy="9" r="7.500" fill="#5e5e5e"/></g>
<g id="full"><path d="M2 2l7 1-2 2 3 3-2 2-3-3-2 2zM22 2l-1 7-2-2-3 3-2-2 3-3-2-2z" fill="#5b8bc5"/><path d="M22 20l-7-1 2-2-3-3 2-2 3 3 2-2z" fill="#5b8bc5"/><circle cx="12" cy="11" r="6.500" fill="#bbb"/><path d="M2 22l6-6" stroke="#f0c93a" stroke-width="2.500"/></g>
<g id="map"><path d="M3 2h17v18H3z" fill="#ddd"/><path d="M3 2h3v18H5l-2-2z" fill="#a8a8a8"/></g>
<g id="gear"><path d="M12 1v22M1 12h22M4.200 4.200l15.600 15.600M19.800 4.200L4.200 19.800" stroke="#5b8bd5" stroke-width="3.200"/><circle cx="12" cy="12" r="7" fill="#5b8bd5"/><circle cx="12" cy="12" r="3.800" fill="#dbe8f6"/></g>
<g id="tbl"><rect x="2" y="2" width="20" height="20" fill="#5c5c5c"/><path d="M2 6h20M3 10h18M3 14h18M3 18h18M8 7v15" stroke="#2f2f2f"/></g>
<g id="agear"><circle cx="10" cy="10" r="7" fill="none" stroke="#5c5c5c" stroke-width="3.500" stroke-dasharray="3 1.500"/><circle cx="10" cy="10" r="4" fill="#555"/><path d="M8 8l5 2-5 2z" fill="#333"/><path d="M13 13l3 8 2-3 4 4 1-1-4-4 3-2z" fill="#666"/></g>
<g id="vtx"><path d="M3 3l6 14 5-14" fill="none" stroke="#5b8bc5" stroke-width="1.300"/><path d="M3 3h.5M9 17h.5M14 3h.5M19 3h.5" stroke="#fff" stroke-width="2.500" stroke-linecap="round"/></g>
<g id="vtxd"><path d="M3 3l6 14 5-14" fill="none" stroke="#2c3e58" stroke-width="1.300"/><path d="M3 3h.5M9 17h.5M14 3h.5M19 3h.5" stroke="#ddd" stroke-width="2.500" stroke-linecap="round"/></g>
<g id="feather"><path d="M2 22C4 12 11 4 22 1c-1 8-6 14-13 15-3 1-5 3-7 6z" fill="#5b8bc5"/><path d="M3 21C8 13 14 7 21 2" stroke="#cde" stroke-width=".7" fill="none"/></g>
<g id="grid"><path d="M1 1h21v11H1z" fill="#5b8bc5" stroke="#bcd"/><path d="M1 1l9 11M10 1L1 12M10 1v11M22 1L12 12" stroke="#234" fill="none"/><path d="M1 14h9v4H1zM1 19h9v4H1zM12 14h8v4h-8zM12 19h8v4h-8z" fill="#5b8bc5"/></g>
<g id="vframe"><rect x="1" y="1" width="21" height="22" rx="2" fill="#7ea5cf" stroke="#c8d8ea"/><path d="M4 3l7 14 7-14" fill="none" stroke="#f0f0f0" stroke-width="1.500"/><circle cx="11" cy="17" r="2.500" fill="#7ea5cf" stroke="#fff"/></g>
<g id="abc"><path d="M0 8l4-5h19v10H4z" fill="#55523f"/><text x="5" y="12" class="ta dm">abc</text></g>
<g id="abd"><path d="M0 8l4-5h17v10H4z" fill="#55523f"/><text x="5" y="12" class="ta dm">ab</text></g>
<g id="wgl"><circle cx="12" cy="11" r="10.500" fill="#2e4f78" stroke="#5b8bc5" stroke-width="1.500" fill-opacity=".6"/><path d="M2 8h20M2 14h20M12 1c-7 6-7 14 0 20M12 1c7 6 7 14 0 20" fill="none" stroke="#6c9bd0"/></g>
<g id="earth"><circle cx="12" cy="10" r="11" fill="#b9cfe8"/><path d="M3 7l3-2 3 1-2 3-3 0zM11 3l5-1 1 2-3 2zM10 8l5-1 1 3-3 1 0 4-2 1zM18 6l3 2 0 3-3-1zM5 11l2 1-1 3z" fill="#4a6d99"/></g>
<g id="sci"><circle cx="8" cy="9" r="7" fill="#555"/><circle cx="17" cy="9" r="6.500" fill="#4e4e4e"/><path d="M8 10l10 12M17 10L6 22" stroke="#3a3a3a" stroke-width="1.500"/><circle cx="6" cy="22" r="1.500" fill="none" stroke="#4e4e4e"/><circle cx="18" cy="22" r="1.500" fill="none" stroke="#4e4e4e"/></g>
<g id="drw"><path d="M1 1h9v6H1zM13 1h9v6h-9zM1 9h9v6H1zM13 9h9v6h-9zM1 17h9v6H1zM13 17h9v6h-9z" fill="#6a6a6a"/><path d="M4 4h3M16 4h3M4 12h3M16 12h3M4 20h3M16 20h3" stroke="#2c2c2c" stroke-width="1.500"/></g>
<g id="hist"><path d="M1 23c3-1 3-8 3-14 0-5 1-7 4-7 2 0 3 3 3 7 0 6 5 12 12 14z" fill="#8bc83a"/><path d="M10 23c2-3 3-8 4-14 .5-5 2-5 3 0s1 12 2 14z" fill="#ccc"/><path d="M0 23h23" stroke="#5a8a20"/></g>
<g id="sun"><circle cx="11" cy="11" r="6.500" fill="#f0d500"/><path d="M11 0v3M0 11h3M19 11h3M3 3l2 2M19 3l-2 2M3 19l2-2" stroke="#e8a800" stroke-width="1.500"/></g>
<g id="con"><circle cx="10" cy="11" r="9" fill="#3a3a3a" stroke="#666"/><path d="M4 17a9 9 0 0 1 12-13z" fill="#555"/></g>
<g id="gam"><path d="M1 3c3-2 5 1 6 9 0 5 0 8-1 11M14 2c-3 3-6 6-8 11" fill="none" stroke="#505050" stroke-width="1.200"/></g>
</defs>
</svg>
</body>
</html>
```
FILE: styles.css
```css
* { box-sizing: border-box; }
html, body { margin: 0; height: 633px; overflow: hidden; }
body { background: #303030; font-family: "Noto Sans", "Open Sans", sans-serif; font-size: 14px; color: #cfcfcf; }
i { display: block; font-style: normal; }
.app { height: 633px; border: 1px solid #453a60; display: flex; flex-direction: column; }
.menu { height: 20px; display: flex; gap: 15.600px; padding-left: 11px; align-items: center; color: #b4b4b4; line-height: 20px; margin-bottom: 1px; }
.row { height: 39px; flex: none; display: flex; align-items: center; padding-left: 4px; }
.h { width: 2px; height: 16px; background: #5a5a5a; flex: none; }
.b { width: 34px; height: 33px; flex: none; display: flex; align-items: center; justify-content: center; }
.b svg, .v svg { width: 24px; height: 24px; overflow: visible; }
.b.on { border: 1px solid #c98a30; }
.a { width: 15px; height: 8px; flex: none; }
.a::after { content: ""; display: block; margin: 1px auto 0; width: 0; border: 3px solid transparent; border-top: 6px solid #a0a0a0; border-bottom: 0; }
.s { flex: none; height: 20px; display: flex; justify-content: flex-end; padding-right: 1px; }
.s::after { content: ""; width: 2px; height: 20px; background: #5a5a5a; }
.s.dim::after { background: #3e3e3e; }
.s.none::after { background: transparent; }
.w3 { width: 3px; } .w4 { width: 4px; } .w5 { width: 5px; } .w6 { width: 6px; } .w8 { width: 8px; } .w9 { width: 9px; } .w10 { width: 10px; } .w11 { width: 11px; }
.bl3 { stroke: #5b8bc5; stroke-width: 3; fill: none; }
.wh2 { stroke: #fff; stroke-width: 2; fill: none; }
.gr2 { stroke: #888; stroke-width: 2; fill: none; }
.gl1 { stroke: #aaa; stroke-width: .7; fill: none; }
.ck { stroke: #445; stroke-width: 1.500; fill: none; }
.rl { stroke: #3f6fa5; stroke-width: 1.500; fill: none; }
.arw { stroke: #ddd; stroke-width: 1.500; fill: none; }
.nd { fill: #1e6fe0; }
text { font-family: "Liberation Sans", sans-serif; }
.t11 { font-size: 8px; font-weight: 700; fill: #111; text-anchor: middle; }
.ti { font-family: "Liberation Serif", serif; font-size: 15px; font-style: italic; font-weight: 700; fill: #fff; text-anchor: middle; }
.ts { font-size: 10px; fill: #ccc; text-anchor: middle; }
.ta { font-size: 9px; font-weight: 700; }
.dk { fill: #111; } .wt { fill: #fff; } .dm { fill: #2a2a20; }
.tq { font-size: 15px; fill: #fff; text-anchor: middle; }
.tA { font-size: 20px; font-weight: 700; fill: #5b8bc5; }
.tT { font-family: "Liberation Serif", serif; font-size: 17px; font-weight: 700; fill: #222; stroke: #fff; stroke-width: .8; }
.tB { font-family: "Liberation Serif", serif; font-size: 16px; font-weight: 700; fill: #222; text-anchor: middle; }
.main { flex: 1; display: flex; min-height: 0; margin-top: 1px; }
.vt { width: 54px; flex: none; display: flex; flex-wrap: wrap; align-content: flex-start; padding-top: 2px; }
.vh { width: 54px; height: 1px; }
.vh::before { content: ""; display: block; width: 9px; height: 1px; margin-left: 24px; background: #666; }
.v { width: 38px; height: 34px; flex: none; display: flex; align-items: center; padding-left: 7px; }
.vt .a { width: 10px; margin-top: 13px; align-self: flex-start; }
.vt .v:not(:has(+ .a)) { margin-right: 10px; }
.vt .vh + .v { margin-top: 2px; }
.panel { width: 220px; flex: none; display: flex; flex-direction: column; }
.ptitle { height: 17px; display: flex; align-items: center; justify-content: center; position: relative; color: #9a9a9a; font-size: 14px; padding-right: 26px; }
.flt { width: 10px; height: 10px; position: absolute; right: 3px; top: 1px; }
.ptools { height: 30px; margin-bottom: 2px; display: flex; align-items: center; padding-left: 6px; gap: 10.500px; }
.ptools svg { width: 16px; height: 16px; flex: none; overflow: visible; }
.ptools .a.t { width: 7px; margin: 0 -2px 0 -4px; }
.tree { flex: 1; border: 1px solid #5a5a5a; border-bottom: 0; background: #222; padding: 1px 1px 0 1px; }
.sel { height: 27px; padding-bottom: 2px; background: #107000; display: flex; align-items: center; color: #e4e4e4; }
.tw { width: 0; margin-left: 7px; border: 4px solid transparent; border-top: 6px solid #7f9f7a; border-bottom: 0; }
.eye { width: 18px; height: 12px; margin-left: 8px; }
.rst { width: 14px; height: 14px; margin-left: 7px; }
.sel b { margin-left: 6px; font-weight: 700; text-decoration: underline; font-size: 14px; }
.lname { height: 26px; margin-left: 40px; border-bottom: 1px solid #3a3a3a; line-height: 26px; padding-left: 3px; color: #d8d8d8; }
.legend { margin-left: 40px; height: 103px; padding: 3px 0 0 3px; border-bottom: 1px solid #3a3a3a; display: flex; }
.ramp { width: 16px; height: 96px; background: linear-gradient(#fff, #000); }
.vals { margin-left: 9px; height: 97px; display: flex; flex-direction: column; justify-content: space-between; color: #000; line-height: 20px; }
.split { width: 7px; flex: none; }
.map { flex: 1; background: #fff; margin: 0 -1px -1px 0; border-right: 1px solid #c9c2e6; border-bottom: 1px solid #c9c2e6; min-width: 0; }
.cv { display: block; width: 1122px; height: 453px; }
.riv { fill: none; stroke: #a8a8a8; stroke-width: 1.800; opacity: .45; }
.riv2 { fill: none; stroke: #2e2e2e; stroke-width: 1.500; opacity: .55; }
.defs { display: block; width: 0; height: 0; }
```
